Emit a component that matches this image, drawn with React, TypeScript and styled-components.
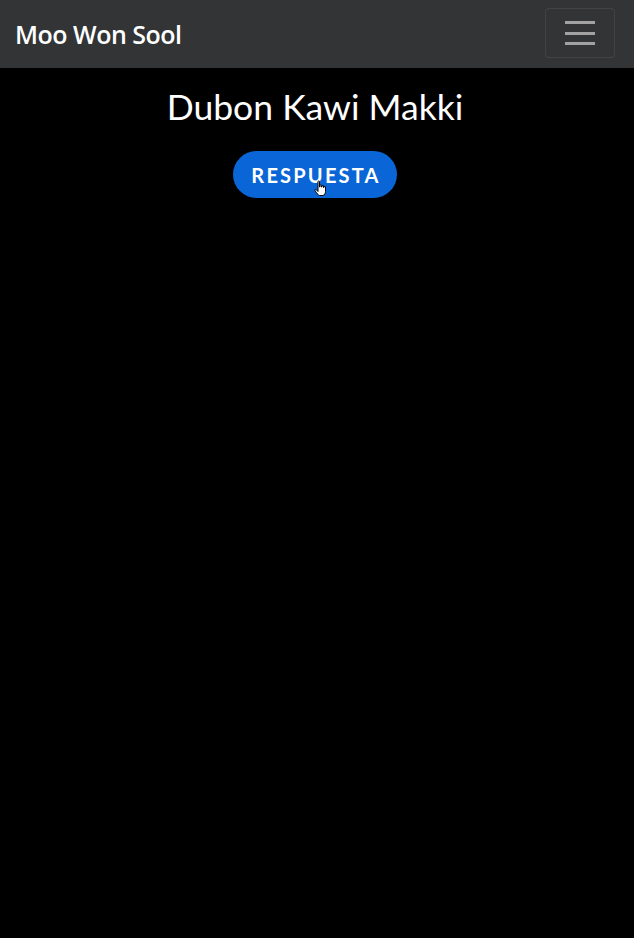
import styled, { createGlobalStyle } from 'styled-components';

const GlobalStyle = createGlobalStyle`
  html, body {
    margin: 0;
    padding: 0;
    background: #000;
  }
  body {
    font-family: Lato, "Open Sans", sans-serif;
    min-height: 938px;
  }
`;

const Navbar = styled.nav`
  height: 68px;
  background-color: #323436;
  display: flex;
  align-items: center;
  justify-content: space-between;
  padding: 0 19px 0 15px;
  box-sizing: border-box;
`;

const Brand = styled.a`
  color: #fff;
  font-family: "Open Sans", sans-serif;
  font-size: 25px;
  font-weight: 600;
  letter-spacing: -0.5px;
  text-decoration: none;
`;

const Toggler = styled.button`
  width: 70px;
  height: 50px;
  margin-top: -2px;
  background: transparent;
  border: 1px solid rgba(255, 255, 255, 0.08);
  border-radius: 4px;
  display: flex;
  flex-direction: column;
  align-items: center;
  justify-content: center;
  gap: 7.5px;
  padding: 0;
`;

const Bar = styled.span`
  display: block;
  width: 30px;
  height: 3px;
  background: #a2a2a2;
`;

const Main = styled.main`
  display: flex;
  flex-direction: column;
  align-items: center;
  padding-top: 17px;
`;

const Title = styled.h1`
  margin: 0 4px 0 0;
  color: #fff;
  font-family: Lato, sans-serif;
  font-size: 35.5px;
  font-weight: 400;
  line-height: 44px;
`;

const AnswerButton = styled.button`
  position: relative;
  margin: 22px 4px 0 0;
  height: 47px;
  width: 164px;
  border: none;
  border-radius: 24px;
  background: #0a66d6;
  color: #fff;
  font-family: Lato, sans-serif;
  font-weight: 700;
  font-size: 20px;
  letter-spacing: 2.2px;
  padding: 0 0 0 2px;
`;

const Cursor = styled.svg`
  position: absolute;
  left: 81px;
  top: 29px;
`;

export default function App() {
  return (
    <>
      <GlobalStyle />
      <Navbar>
        <Brand>Moo Won Sool</Brand>
        <Toggler aria-label="menu">
          <Bar />
          <Bar />
          <Bar />
        </Toggler>
      </Navbar>
      <Main>
        <Title>Dubon Kawi Makki</Title>
        <AnswerButton>
          RESPUESTA
          <Cursor width="14" height="17" viewBox="0 0 14 17">
            <path
              d="M4 1.5c0-.8 1.5-.8 1.5 0V7h.5V5.5c0-.8 1.5-.8 1.5 0V7h.5V6c0-.8 1.5-.8 1.5 0V7.5h.5V7c0-.8 1.5-.8 1.5 0v4.5c0 2-1 3.5-2.5 4H5.5C4 15 2 12.5 1 10.5c-.4-.8.6-1.5 1.3-.8L4 11.5z"
              fill="#fff"
              stroke="#000"
              strokeWidth="1"
            />
          </Cursor>
        </AnswerButton>
      </Main>
    </>
  );
}
